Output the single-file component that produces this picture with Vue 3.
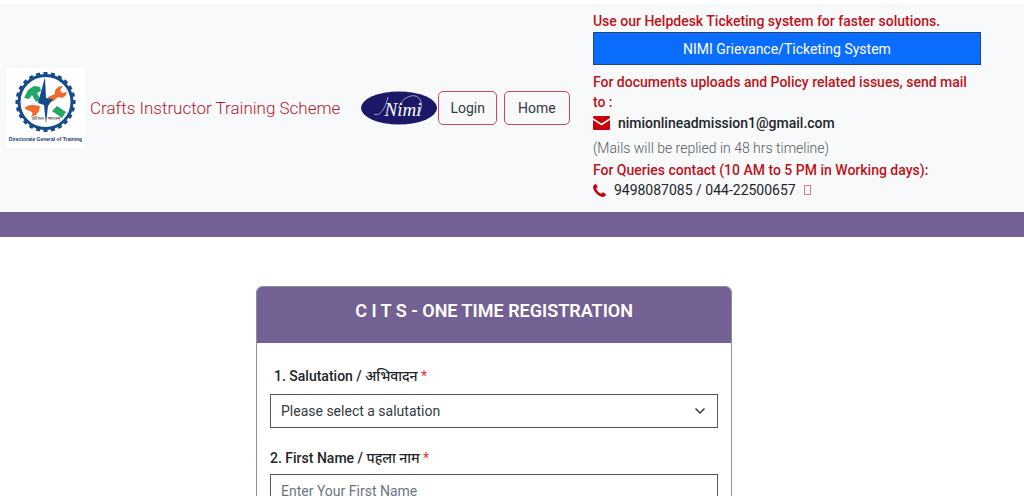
<script setup>
import { ref } from 'vue'

const salutation = ref('')
const firstName = ref('')
const salutations = ['Mr', 'Ms', 'Mrs']
const teeth = Array.from({ length: 24 }, (_, i) => i * 15)
</script>

<template>
  <div class="page">
    <header class="top">
      <div class="brand">
        <svg class="dgt" viewBox="0 0 78 80" role="img" aria-label="Directorate General of Training">
          <rect width="78" height="80" fill="#fff" />
          <g fill="#174a8c">
            <rect v-for="a in teeth" :key="a" x="36.500" y="4" width="4" height="4" :transform="`rotate(${a} 38.5 34)`" />
          </g>
          <circle cx="38.5" cy="34" r="26.500" fill="#fff" stroke="#174a8c" stroke-width="3" />
          <path d="M17 30l4-8 6-4 6 1 1 4-4 2 4 7-5 2-4-7-3 4z" fill="#22a866" />
          <path d="M42 32l-1-3 7-3c-1-5 3-8 8-8l-3 4 2 3 5-1c-1 5-5 7-9 5l-6 5z" fill="#f2692c" />
          <path d="M18 41c0-3 4-4 8-4l7 1-1 5-3 4-5 2c2-3 2-5-1-6z" fill="#f2692c" />
          <path d="M50 38l9 6-4 6-10-7z" fill="#22a866" />
          <path d="M38 9l-7 26 6 2 2 19 2-18 5-7-7-1z" fill="#174a8c" />
          <text x="31" y="52" class="motto" text-anchor="middle">कौशल</text>
          <text x="47" y="52" class="motto" text-anchor="middle">भारतम्</text>
          <text x="38.5" y="73" class="caption" text-anchor="middle">Directorate General of Training</text>
        </svg>
        <h1>Crafts Instructor Training Scheme</h1>
        <svg class="nimi" viewBox="0 0 76 34" role="img" aria-label="Nimi">
          <ellipse cx="38" cy="17" rx="38" ry="16.5" fill="#1c1868" />
          <text x="42" y="25" text-anchor="middle" class="nimi-word">Nimi</text>
          <path d="M13 23c5 3 11-4 14-17M38 17c1-9 14-16 20-10 4 5 3 14-3 18" fill="none" stroke="#dcd9f0" stroke-width=".7" />
        </svg>
        <nav>
          <a href="#login" class="btn">Login</a>
          <a href="#home" class="btn home">Home</a>
        </nav>
      </div>
      <section class="help">
        <p class="red">Use our Helpdesk Ticketing system for faster solutions.</p>
        <button type="button" class="ticket">NIMI Grievance/Ticketing System</button>
        <p class="red">For documents uploads and Policy related issues, send mail to :</p>
        <p class="line mail">
          <svg class="envelope" viewBox="0 0 17 14" aria-hidden="true">
            <path d="M1 0h15a1 1 0 0 1 1 1v1L8.500 7.500 0 2V1a1 1 0 0 1 1-1zM0 4l8.500 5.500L17 4v9a1 1 0 0 1-1 1H1a1 1 0 0 1-1-1z" fill="#c9030c" />
          </svg>
          nimionlineadmission1@gmail.com
        </p>
        <p class="note">(Mails will be replied in 48 hrs timeline)</p>
        <p class="red">For Queries contact (10 AM to 5 PM in Working days):</p>
        <p class="line phone">
          <svg class="handset" viewBox="0 0 13 13" aria-hidden="true">
            <path d="M3 0C1 0 0 2 0 3.500 1 8 5 12 9.500 13 11 13 13 12 13 10.300L10 8.300 8.300 9.800C6 8.800 4.200 7 3.200 4.700L4.700 3z" fill="#c9030c" />
          </svg>
          <span>9498087085 / 044-22500657</span>
          <span class="missing"></span>
        </p>
      </section>
    </header>
    <div class="bar"></div>
    <main class="card">
      <h2>C I T S - ONE TIME REGISTRATION</h2>
      <form @submit.prevent>
        <div class="field">
          <label for="salutation" class="indent">1. Salutation / अभिवादन <span class="req">*</span></label>
          <div class="select">
            <select id="salutation" v-model="salutation">
              <option value="">Please select a salutation</option>
              <option v-for="s in salutations" :key="s" :value="s">{{ s }}</option>
            </select>
            <svg viewBox="0 0 16 16" aria-hidden="true"><path d="M3.500 5.500L8 10l4.500-4.500" /></svg>
          </div>
        </div>
        <div class="field">
          <label for="first-name">2. First Name / पहला नाम <span class="req">*</span></label>
          <input id="first-name" v-model="firstName" type="text" placeholder="Enter Your First Name" />
        </div>
      </form>
    </main>
  </div>
</template>

<style>
html {
  height: 100%;
}
body {
  height: 100%;
  margin: 0;
  overflow: hidden;
  background: #fff;
}
</style>

<style scoped>
* {
  box-sizing: border-box;
}
.page {
  padding-top: 4px;
  font-family: Roboto, "Noto Sans", sans-serif;
  font-size: 14px;
  line-height: 20px;
  color: #212529;
}
h1,
h2,
p {
  margin: 0;
}
.top {
  display: grid;
  grid-template-columns: 579fr 379fr 42fr;
  background: #f8f9fb;
}
.brand {
  display: flex;
  align-items: center;
  padding: 0 0 1px 7px;
}
.dgt {
  width: 78px;
  height: 80px;
  flex: none;
}
.motto {
  font-size: 5px;
  fill: #333;
}
.caption {
  font: 700 5px "Liberation Sans", sans-serif;
  fill: #183a78;
}
h1 {
  padding: 0 16px 0 5px;
  font-size: 17px;
  line-height: 24px;
  font-weight: 300;
  color: #b5202c;
  white-space: nowrap;
}
.nimi {
  width: 76px;
  height: 34px;
  flex: none;
  margin-left: 5px;
}
.nimi-word {
  font: italic 19px "Liberation Serif", serif;
  fill: #fff;
}
nav {
  display: flex;
  gap: 7px;
  margin-left: 1px;
}
.btn {
  padding: 6px 11px;
  border: 1px solid #d0485a;
  border-radius: 5px;
  color: #343a40;
  text-decoration: none;
}
.btn.home {
  padding-left: 13px;
  padding-right: 13px;
}
.help {
  padding: 7px 0 12px;
}
.red {
  font-weight: 500;
  color: #be131a;
}
.ticket {
  display: block;
  width: 100%;
  height: 33px;
  margin: 1px 0 7px;
  border: 1px solid #24456f;
  background: #0b6dfd;
  color: #fff;
  font: inherit;
}
.line {
  display: flex;
  align-items: center;
  font-weight: 500;
}
.mail {
  gap: 8px;
  margin: 1px 0 5px;
}
.phone {
  gap: 8px;
  font-weight: 400;
}
.envelope {
  width: 17px;
  height: 14px;
}
.handset {
  width: 13px;
  height: 13px;
}
.missing {
  width: 7px;
  height: 10px;
  border: 1px solid #dc7a80;
}
.note {
  margin-bottom: 2px;
  font-weight: 300;
  color: #55595e;
}
.bar {
  height: 25px;
  background: #746193;
}
.card {
  width: 46.5%;
  margin: 49px 0 0 25%;
  border: 1px solid #918ca5;
  border-radius: 6px;
  overflow: hidden;
}
h2 {
  padding: 12px 0 20px;
  background: #746193;
  color: #fff;
  font-size: 18px;
  line-height: 24px;
  font-weight: 600;
  text-align: center;
}
form {
  padding: 21px 13px;
}
.field {
  margin-bottom: 18px;
}
label {
  display: block;
  margin-bottom: 4px;
  line-height: 24px;
  font-weight: 500;
}
.indent {
  margin-bottom: 6px;
  padding-left: 4px;
}
.req {
  font-weight: 400;
  color: #dc3545;
}
.select {
  display: grid;
  align-items: center;
}
.select > * {
  grid-area: 1 / 1;
}
select,
input {
  width: 100%;
  height: 34px;
  padding: 0 10px;
  border: 1px solid #55575a;
  border-radius: 0;
  background: #fff;
  color: #343a40;
  font: inherit;
  appearance: none;
}
input::placeholder {
  color: #6c757d;
  opacity: 1;
}
.select svg {
  width: 16px;
  height: 16px;
  margin-right: 10px;
  justify-self: end;
  pointer-events: none;
  fill: none;
  stroke: #343a40;
  stroke-width: 1.500;
}
</style>
